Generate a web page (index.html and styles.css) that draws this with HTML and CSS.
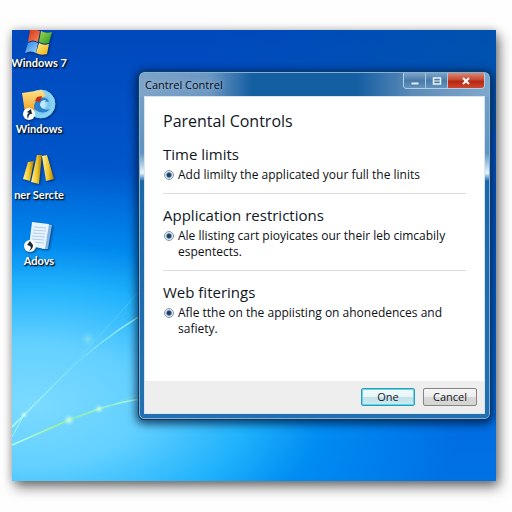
FILE: index.html
```html
<!DOCTYPE html>
<html lang="en">
<head>
<meta charset="utf-8">
<title>Parental Controls</title>
<link rel="stylesheet" href="styles.css">
</head>
<body>
<main class="desktop">
  <svg class="streaks" viewBox="0 0 484 451" preserveAspectRatio="xMinYMax slice" aria-hidden="true">
    <defs>
      <radialGradient id="glow">
        <stop offset="0" stop-color="#f4ffdf"/>
        <stop offset=".3" stop-color="#c8ffd8" stop-opacity=".65"/>
        <stop offset="1" stop-color="#a0f0ff" stop-opacity="0"/>
      </radialGradient>
      <linearGradient id="ray" x1="0" x2="1" y1="1" y2="0">
        <stop offset="0" stop-color="#bffff0"/>
        <stop offset=".55" stop-color="#7de4f8" stop-opacity=".55"/>
        <stop offset="1" stop-color="#c0fff0"/>
      </linearGradient>
      <linearGradient id="ray2" x1="0" x2="1" y1="1" y2="0">
        <stop offset="0" stop-color="#b8ffec"/>
        <stop offset=".45" stop-color="#9cf28e"/>
        <stop offset="1" stop-color="#a8f8f0"/>
      </linearGradient>
    </defs>
    <g fill="none">
      <path d="M0 397L12 385L50 347Q84 313 128 286" stroke="url(#ray)" stroke-width="1.4"/>
      <path d="M0 407Q6 396 12 385" stroke="#a4f6f2" stroke-width="1"/>
      <path d="M50 346Q94 300 128 260" stroke="#8ce4fc" stroke-opacity=".35"/>
      <path d="M0 415L57 390L87 379Q108 372 128 369" stroke="url(#ray2)" stroke-width="1.4"/>
      <path d="M57 390Q98 377 128 363" stroke="#84e4c8" stroke-opacity=".8"/>
    </g>
    <g fill="url(#glow)">
      <circle cx="12" cy="385" r="4"/>
      <circle cx="57" cy="390" r="6"/>
      <circle cx="87" cy="379" r="5"/>
      <circle cx="76" cy="309" r="8" opacity=".3"/>
    </g>
  </svg>

  <nav class="icons" aria-label="Desktop">
    <a class="icon" href="#">
      <svg width="28" height="25" viewBox="0 0 28 25">
        <defs>
          <linearGradient id="fr" x2="1" y2="1"><stop stop-color="#d8321c"/><stop offset="1" stop-color="#f58a50"/></linearGradient>
          <linearGradient id="fg" x2="1" y2="1"><stop stop-color="#a4dc50"/><stop offset="1" stop-color="#239628"/></linearGradient>
          <linearGradient id="fb" x2="1" y2="1"><stop stop-color="#2b80e0"/><stop offset="1" stop-color="#9cd4ff"/></linearGradient>
          <linearGradient id="fy" x2="1" y2="1"><stop stop-color="#fff08a"/><stop offset="1" stop-color="#f2ae0a"/></linearGradient>
        </defs>
        <path d="M5 0Q10 -1 15 1L13 12Q8 9 3 12Z" fill="url(#fr)"/>
        <path d="M16 1Q21 4 27 2L24 13Q19 15 14 12Z" fill="url(#fg)"/>
        <path d="M3 13Q8 10 13 13L11 23Q6 20 0 23Z" fill="url(#fb)"/>
        <path d="M14 13Q19 16 24 14L22 24Q16 26 11 23Z" fill="url(#fy)"/>
      </svg>
      <span>Windows 7</span>
    </a>
    <a class="icon" href="#">
      <svg width="34" height="32" viewBox="0 0 34 32">
        <defs>
          <linearGradient id="or" x2="0" y2="1"><stop stop-color="#ffe38a"/><stop offset="1" stop-color="#f09a18"/></linearGradient>
          <radialGradient id="sw"><stop stop-color="#eafaff"/><stop offset=".55" stop-color="#7cc4ee"/><stop offset="1" stop-color="#8edbf6"/></radialGradient>
        </defs>
        <circle cx="19" cy="15" r="14" fill="url(#sw)" stroke="#7ccdf2"/>
        <path d="M0 4L20 1L24 7L14 13L12 25L3 24Z" fill="url(#or)"/>
        <path d="M12 20Q11 12 18 9Q25 7 27 13Q21 11 18 16Q20 22 28 20Q22 27 12 20Z" fill="#2a80cc"/>
        <path d="M18 16Q18 11 24 11Q21 14 23 18Q20 20 18 16Z" fill="#bceeff"/>
        <path d="M13 12L15 8L20 7L18 13Z" fill="#c42d18"/>
        <circle cx="7" cy="25" r="6" fill="#fff"/>
        <path d="M6 30Q4 25 7 24L5 23L9 20L10 25L8 25Q6 27 6 30Z" fill="#152838"/>
      </svg>
      <span>Windows</span>
    </a>
    <a class="icon" href="#">
      <svg width="32" height="32" viewBox="0 0 32 32">
        <defs>
          <linearGradient id="gold" x2="1"><stop stop-color="#fff3a0"/><stop offset=".55" stop-color="#f0c62c"/><stop offset="1" stop-color="#a97804"/></linearGradient>
        </defs>
        <path d="M5 7L11 6L7 26L0 24Z" fill="url(#gold)"/>
        <path d="M14 0L19 0L16 29L8 27Z" fill="url(#gold)"/>
        <path d="M19 1L24 0L31 24L23 26Z" fill="url(#gold)"/>
      </svg>
      <span>ner Sercte</span>
    </a>
    <a class="icon" href="#">
      <svg width="30" height="32" viewBox="0 0 30 32">
        <path d="M22 3L28 4L24 28L18 28Z" fill="#84b4dd"/>
        <path d="M8 1L25 3L21 28L5 25Z" fill="#e8f4ff"/>
        <path d="M10 6L22 7M9 9L22 10M9 12L21 13M8 15L21 16M8 18L20 19M8 21L20 22" stroke="#b0cee8"/>
        <circle cx="6" cy="25" r="6" fill="#fff"/>
        <path d="M5 30Q8 27 6 25L3 24L6 20L9 24Q9 28 5 30Z" fill="#152838"/>
      </svg>
      <span>Adovs</span>
    </a>
  </nav>

  <section class="window" aria-label="Cantrel Contrel">
    <header class="titlebar">
      <span class="caption">Cantrel Contrel</span>
      <div class="controls">
        <button class="control" type="button" aria-label="Minimize"><svg width="10" height="10" viewBox="0 0 10 10"><path d="M1 6H9V9H1Z" fill="#dcebf6" stroke="#47759d" stroke-width=".8"/></svg></button>
        <button class="control" type="button" aria-label="Maximize"><svg width="10" height="10" viewBox="0 0 10 10"><path d="M1.500 2H8.500V8H1.500Z" fill="#527da2" stroke="#eaf4fb" stroke-width="1.500"/><path d="M2 5H8" stroke="#eaf4fb"/></svg></button>
        <button class="control close" type="button" aria-label="Close"><svg width="10" height="10" viewBox="0 0 10 10"><path d="M2 2L8 8M8 2L2 8" stroke="#fff" stroke-width="2"/></svg></button>
      </div>
    </header>
    <form class="client">
      <div class="content">
        <h1>Parental Controls</h1>
        <section class="group">
          <h2>Time limits</h2>
          <label><input type="radio" name="time" checked><span>Add limilty the applicated your full the linits</span></label>
        </section>
        <section class="group">
          <h2>Application restrictions</h2>
          <label><input type="radio" name="apps" checked><span>Ale llisting cart pioyicates our their leb cimcabily espentects.</span></label>
        </section>
        <section class="group">
          <h2>Web fiterings</h2>
          <label><input type="radio" name="web" checked><span>Afle tthe on the appiisting on ahonedences and safiety.</span></label>
        </section>
      </div>
      <footer class="actions">
        <button class="button primary" type="button">One</button>
        <button class="button" type="button">Cancel</button>
      </footer>
    </form>
  </section>
</main>
</body>
</html>
```
FILE: styles.css
```css
* {
  box-sizing: border-box;
}

body {
  margin: 0;
  min-height: 100vh;
  display: flex;
  padding: 30px 16px 31px 12px;
  background: #fefefe;
  font-family: "Open Sans", "Noto Sans", sans-serif;
  font-size: 12px;
  line-height: 16px;
  color: #0c0f14;
}

.desktop {
  position: relative;
  flex: 1;
  display: flex;
  align-items: flex-start;
  overflow: hidden;
  background:
    radial-gradient(ellipse 430px 240px at 20px 375px, #7cdaff 0, #62d0ff 26%, #20b2fc 50%, rgba(0, 150, 248, 0.75) 68%, rgba(0, 110, 228, 0) 100%),
    linear-gradient(90deg, rgba(0, 90, 170, 0) 40%, rgba(0, 90, 160, 0.5) 100%) top / 100% 100px no-repeat,
    linear-gradient(180deg, #0048bc 0, #0058cc 35%, #0072e6 100%);
}

body::before {
  content: "";
  position: absolute;
  inset: 30px 16px 31px 12px;
  box-shadow: 3px 6px 12px rgba(0, 0, 0, 0.55), 0 0 8px rgba(0, 0, 0, 0.2);
}

.streaks {
  position: absolute;
  inset: 0;
  width: 100%;
  height: 100%;
}

.icons {
  position: relative;
  flex: none;
  width: 54px;
  margin-right: 73px;
  display: flex;
  flex-direction: column;
  gap: 18px;
}

.icon {
  display: flex;
  flex-direction: column;
  align-items: center;
  color: #fff;
  font-family: Lato, "Open Sans", sans-serif;
  font-size: 11px;
  font-weight: 700;
  text-decoration: none;
  white-space: nowrap;
  text-shadow: 1px 1px 2px #001428, 1px 1px 1px #001428;
}

.icon svg {
  filter: drop-shadow(1px 1px 1px rgba(0, 20, 60, 0.6));
}

.window {
  position: relative;
  flex: 1;
  min-width: 0;
  margin: 42px 6px 0 0;
  padding: 0 4px 4px;
  border: 1px solid #7fb2d8;
  border-radius: 5px;
  outline: 1px solid #123a62;
  background:
    linear-gradient(90deg, #7fa3c8 0, #6b97c2 20%, #145ea2 32%, #145ea2 62%, #5b8bb8 78%, #7fa8cc 100%) top / 100% 24px no-repeat,
    linear-gradient(180deg, #7fa3c8 0, #5f93c0 80px, #e8f4fc 100px, #1c66aa 108px, #2470b0 100%);
  box-shadow: 0 2px 9px 3px rgba(0, 22, 56, 0.75);
}

.titlebar {
  display: flex;
  justify-content: space-between;
  align-items: flex-start;
  height: 23px;
}

.caption {
  padding: 4px 0 0 1px;
  font-size: 11px;
  line-height: 16px;
  color: #060c18;
  text-shadow: 0 0 5px #b4cce2;
}

.controls {
  display: flex;
  border: 1px solid #b4cfe5;
  border-top: 0;
  border-radius: 0 0 4px 4px;
  overflow: hidden;
}

.control {
  width: 22px;
  height: 15px;
  padding: 0;
  border: 0;
  border-right: 1px solid #a9c6de;
  display: grid;
  place-items: center;
  background: linear-gradient(#7fa5c8, #4a7cab 50%, #6494bd);
}

.close {
  width: 36px;
  border-right: 0;
  background: linear-gradient(#d88a78, #c84830 45%, #b42814 55%, #d0452c);
}

.client {
  display: flex;
  flex-direction: column;
  background: #fff;
  border: 1px solid #d5e5f1;
}

.content {
  padding: 13px 18px 44px;
}

h1,
h2 {
  margin: 0;
  font-weight: 400;
  color: #101824;
}

h1 {
  margin-bottom: 12px;
  font-size: 16px;
  line-height: 22px;
}

h2 {
  margin-bottom: 3px;
  font-size: 15px;
  line-height: 20px;
}

.group + .group {
  margin-top: 10px;
  padding-top: 11px;
  border-top: 1px solid #dcdcdc;
}

label {
  display: flex;
  gap: 4px;
  padding-left: 1px;
}

input {
  appearance: none;
  flex: none;
  width: 10px;
  height: 10px;
  margin: 3px 0 0;
  border: 1px solid #8797a8;
  border-radius: 50%;
  background: radial-gradient(circle, #1b3450 0, #294c70 2px, #c2d6e8 3px, #eef5fa 4px);
}

.actions {
  display: flex;
  justify-content: flex-end;
  gap: 8px;
  padding: 7px;
  background: #eee;
}

.button {
  width: 54px;
  height: 18px;
  padding: 0;
  border: 1px solid #858585;
  border-radius: 2px;
  font: inherit;
  font-size: 11px;
  line-height: 16px;
  color: #14181c;
  background: linear-gradient(#f6f6f6 0, #ececec 50%, #d8d8d8 52%, #d4d4d4 100%);
}

.primary {
  border-color: #2c9db8;
  box-shadow: inset 0 0 0 1px #66d4e8;
  background: linear-gradient(#f2fafc 0, #e6f4f8 50%, #c4dfe8 52%, #c8eef4 100%);
}
```
